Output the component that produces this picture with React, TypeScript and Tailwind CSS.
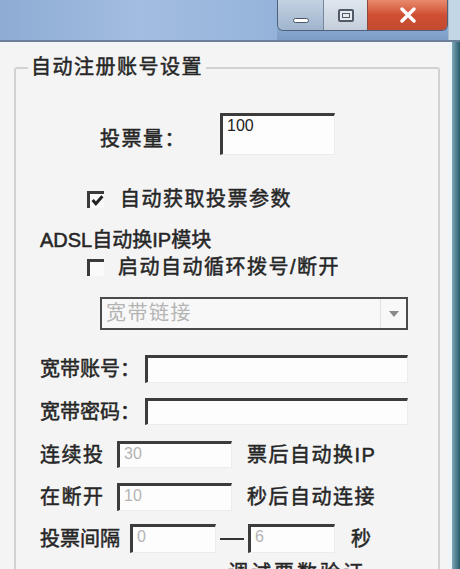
import React from 'react';

const font = { fontFamily: '"Liberation Sans", "Noto Sans CJK SC", sans-serif' };

const Sunken: React.FC<{ className?: string; value?: string; dim?: boolean }> = ({ className = '', value = '', dim }) => (
  <div
    className={`flex shrink-0 items-start border-t-[3px] border-l-[3px] border-r border-b border-t-[#3c3c3c] border-l-[#3c3c3c] border-r-[#ececec] border-b-[#ececec] bg-[#fdfdfd] pl-1 text-[16px] leading-[20px] tracking-normal [-webkit-text-stroke:0px] ${
      dim ? 'text-[#b4b4b4]' : 'text-[#222]'
    } ${className}`}
  >
    {value}
  </div>
);

const CheckBox: React.FC<{ checked?: boolean }> = ({ checked }) => (
  <div className="flex h-[17px] w-[17px] shrink-0 items-center justify-center border-t-[3px] border-l-[3px] border-t-[#3a3a3a] border-l-[#3a3a3a] bg-[#fafafa]">
    {checked && (
      <svg viewBox="0 0 12 12" className="h-[13px] w-[13px]">
        <path d="M1.5 5.5 L4.5 9 L10.5 2" fill="none" stroke="#222" strokeWidth="2.8" />
      </svg>
    )}
  </div>
);

const TitleBar: React.FC = () => (
  <div className="flex h-[42px] w-full flex-col">
    <div className="flex h-[40px] w-full bg-gradient-to-b from-[#b9c9da] via-[#93b2da] to-[#7d9cc6]">
      <div className="flex-1 bg-gradient-to-r from-[#8eacd4] via-[#a3bde0] to-[#95b3da]" />
      <div className="flex h-[31px] w-[171px] overflow-hidden rounded-b-[6px] border border-t-0 border-[#506078]">
        <div className="flex w-[45px] items-end justify-center bg-gradient-to-b from-[#c4d2e2] to-[#9fb4ce] pb-[7px]">
          <div className="h-[5px] w-[16px] rounded-sm border border-[#4b5768] bg-white" />
        </div>
        <div className="flex w-[44px] items-center justify-center border-l border-[#7486a0] bg-gradient-to-b from-[#dfe6ee] to-[#c4ceda]">
          <div className="h-[13px] w-[16px] rounded-[2px] border-2 border-[#505a68] bg-[#e6ebf0] p-[2px]">
            <div className="h-full w-full border border-[#505a68]" />
          </div>
        </div>
        <div className="flex flex-1 items-center justify-center border-l border-[#8a4a3e] bg-gradient-to-b from-[#e88a6c] via-[#cf4f33] to-[#c24a30]">
          <svg viewBox="0 0 20 16" className="h-[16px] w-[20px]">
            <path d="M4 2 L16 14 M16 2 L4 14" stroke="#fff" strokeWidth="3.4" strokeLinecap="round" />
          </svg>
        </div>
      </div>
      <div className="w-[12px] border-l border-[#a8bccf] bg-[#c2d6e6]" />
    </div>
    <div className="h-[2px] w-full bg-[#6c7f98]" />
  </div>
);

export default function App() {
  return (
    <div className="flex h-[569px] w-[460px] flex-col overflow-hidden bg-[#f3f3f3]" style={font}>
      <TitleBar />
      <div className="flex flex-1">
        <div className="flex-1 bg-[#f4f4f4] pl-[14px] pt-[25px]">
          <div className="relative h-[560px] w-[426px] whitespace-nowrap rounded-[3px] border-2 border-[#d2d2d2] text-[20px] leading-[22px] tracking-[1.5px] text-[#262626] [-webkit-text-stroke:0.5px_#262626]">
            <div className="absolute left-[12px] top-[-13px] bg-[#f4f4f4] px-[3px]">自动注册账号设置</div>

            <div className="mt-[44px] flex items-center pl-[84px]">
              <div className="w-[120px] pt-[10px]">投票量：</div>
              <Sunken className="h-[42px] w-[115px]" value="100" />
            </div>

            <div className="mt-[33px] flex items-center pl-[71px]">
              <CheckBox checked />
              <span className="ml-[16px]">自动获取投票参数</span>
            </div>

            <div className="mt-[19px] pl-[24px] tracking-normal">ADSL自动换IP模块</div>

            <div className="mt-[5px] flex items-center pl-[71px]">
              <CheckBox />
              <span className="ml-[14px]">启动自动循环拨号/断开</span>
            </div>

            <div className="ml-[84px] mt-[19px] flex h-[33px] w-[308px] border-2 border-[#4a4a4a] bg-[#f8f8f8] [-webkit-text-stroke:0px]">
              <div className="flex-1 pl-[4px] pt-[3px] text-[#b4b4b4]">宽带链接</div>
              <div className="flex w-[26px] items-center justify-center border-l border-[#e2e2e2]">
                <svg viewBox="0 0 10 6" className="h-[6px] w-[10px]">
                  <path d="M0 0 L10 0 L5 6 Z" fill="#8a8a8a" />
                </svg>
              </div>
            </div>

            <div className="mt-[25px] flex items-center pl-[24px]">
              <div className="w-[105px] tracking-normal">宽带账号：</div>
              <Sunken className="h-[28px] w-[263px]" />
            </div>

            <div className="mt-[15px] flex items-center pl-[24px]">
              <div className="w-[105px] tracking-normal">宽带密码：</div>
              <Sunken className="h-[27px] w-[263px]" />
            </div>

            <div className="mt-[16px] flex items-center pl-[24px]">
              <div className="w-[77px]">连续投</div>
              <Sunken className="h-[27px] w-[115px]" value="30" dim />
              <span className="ml-[15px]">票后自动换IP</span>
            </div>

            <div className="mt-[15px] flex items-center pl-[24px]">
              <div className="w-[77px]">在断开</div>
              <Sunken className="h-[28px] w-[115px]" value="10" dim />
              <span className="ml-[15px]">秒后自动连接</span>
            </div>

            <div className="mt-[13px] flex items-center pl-[24px]">
              <div className="w-[90px] tracking-normal">投票间隔</div>
              <Sunken className="h-[29px] w-[86px]" value="0" dim />
              <div className="mx-[4px] h-[2px] w-[24px] shrink-0 bg-[#333]" />
              <Sunken className="h-[29px] w-[87px]" value="6" dim />
              <span className="ml-[16px]">秒</span>
            </div>

            <div className="mt-[9px] pl-[212px] tracking-[3px]">调试票数验证</div>
          </div>
        </div>
        <div className="w-[12px] border-l-4 border-[#eef4f7] bg-gradient-to-r from-[#7fa9b8] to-[#245c6c]" />
      </div>
    </div>
  );
}
